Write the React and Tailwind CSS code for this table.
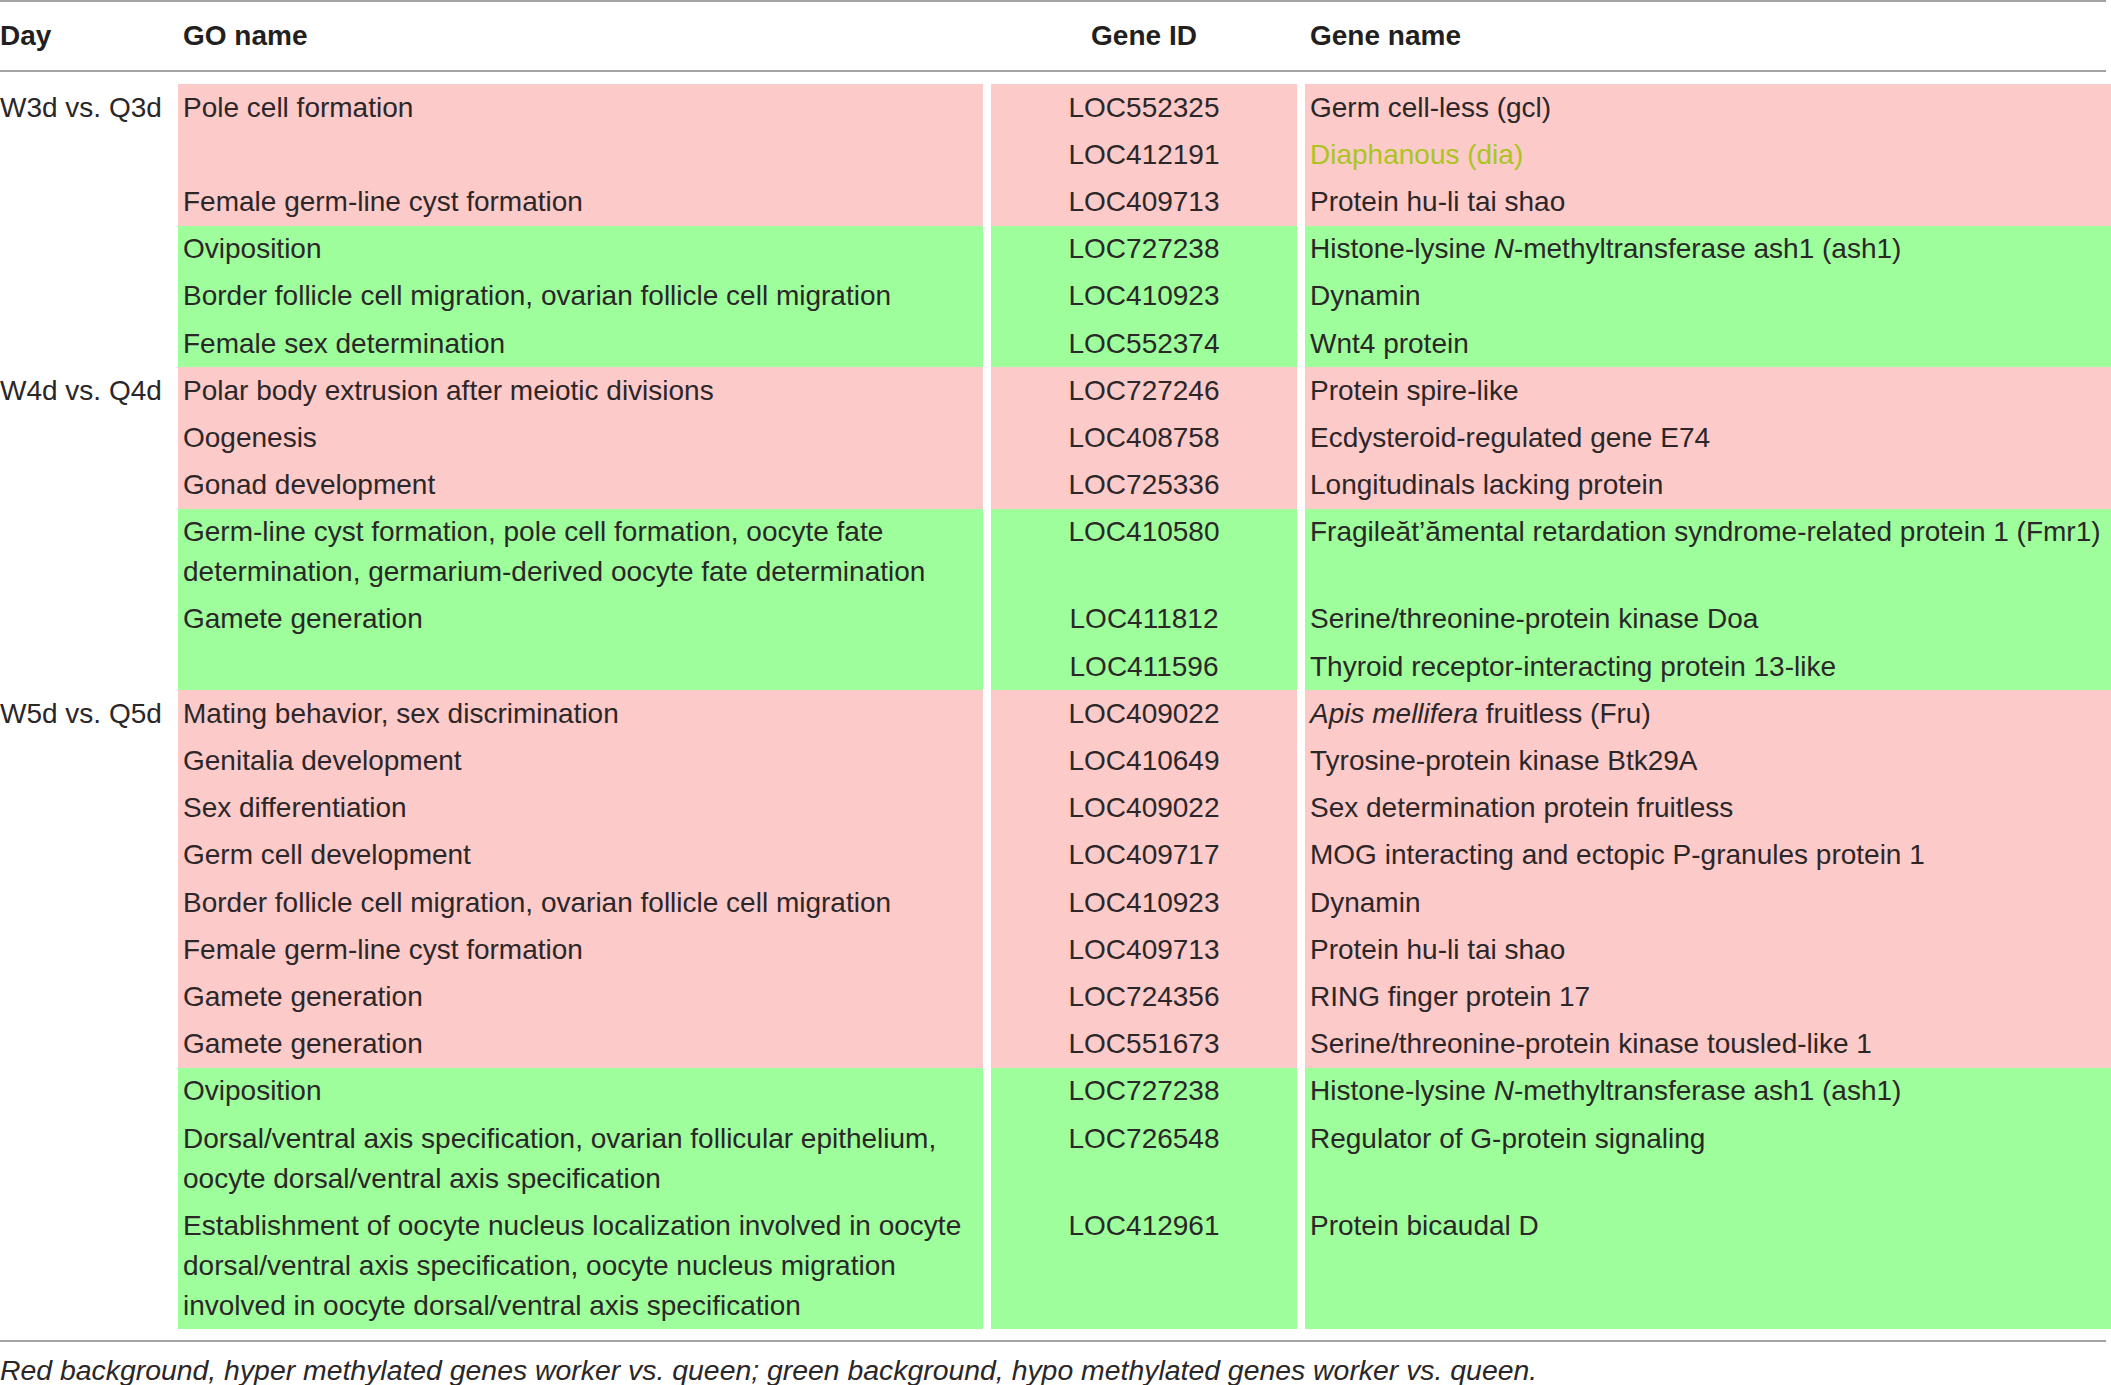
const PINK = 'bg-[#fdcaca]';
const GREEN = 'bg-[#9dfe9b]';

const rows = [
  { day: 'W3d vs. Q3d', go: ['Pole cell formation'], id: 'LOC552325', name: 'Germ cell-less (gcl)', c: 'p' },
  { go: [], id: 'LOC412191', name: <span className="text-[#abc520]">Diaphanous (dia)</span>, c: 'p' },
  { go: ['Female germ-line cyst formation'], id: 'LOC409713', name: 'Protein hu-li tai shao', c: 'p' },
  { go: ['Oviposition'], id: 'LOC727238', name: <>Histone-lysine <i>N</i>-methyltransferase ash1 (ash1)</>, c: 'g' },
  { go: ['Border follicle cell migration, ovarian follicle cell migration'], id: 'LOC410923', name: 'Dynamin', c: 'g' },
  { go: ['Female sex determination'], id: 'LOC552374', name: 'Wnt4 protein', c: 'g' },
  { day: 'W4d vs. Q4d', go: ['Polar body extrusion after meiotic divisions'], id: 'LOC727246', name: 'Protein spire-like', c: 'p' },
  { go: ['Oogenesis'], id: 'LOC408758', name: 'Ecdysteroid-regulated gene E74', c: 'p' },
  { go: ['Gonad development'], id: 'LOC725336', name: 'Longitudinals lacking protein', c: 'p' },
  {
    go: ['Germ-line cyst formation, pole cell formation, oocyte fate', 'determination, germarium-derived oocyte fate determination'],
    id: 'LOC410580',
    name: 'Fragileăt’ămental retardation syndrome-related protein 1 (Fmr1)',
    c: 'g',
  },
  { go: ['Gamete generation'], id: 'LOC411812', name: 'Serine/threonine-protein kinase Doa', c: 'g' },
  { go: [], id: 'LOC411596', name: 'Thyroid receptor-interacting protein 13-like', c: 'g' },
  { day: 'W5d vs. Q5d', go: ['Mating behavior, sex discrimination'], id: 'LOC409022', name: <><i>Apis mellifera</i> fruitless (Fru)</>, c: 'p' },
  { go: ['Genitalia development'], id: 'LOC410649', name: 'Tyrosine-protein kinase Btk29A', c: 'p' },
  { go: ['Sex differentiation'], id: 'LOC409022', name: 'Sex determination protein fruitless', c: 'p' },
  { go: ['Germ cell development'], id: 'LOC409717', name: 'MOG interacting and ectopic P-granules protein 1', c: 'p' },
  { go: ['Border follicle cell migration, ovarian follicle cell migration'], id: 'LOC410923', name: 'Dynamin', c: 'p' },
  { go: ['Female germ-line cyst formation'], id: 'LOC409713', name: 'Protein hu-li tai shao', c: 'p' },
  { go: ['Gamete generation'], id: 'LOC724356', name: 'RING finger protein 17', c: 'p' },
  { go: ['Gamete generation'], id: 'LOC551673', name: 'Serine/threonine-protein kinase tousled-like 1', c: 'p' },
  { go: ['Oviposition'], id: 'LOC727238', name: <>Histone-lysine <i>N</i>-methyltransferase ash1 (ash1)</>, c: 'g' },
  {
    go: ['Dorsal/ventral axis specification, ovarian follicular epithelium,', 'oocyte dorsal/ventral axis specification'],
    id: 'LOC726548',
    name: 'Regulator of G-protein signaling',
    c: 'g',
  },
  {
    go: [
      'Establishment of oocyte nucleus localization involved in oocyte',
      'dorsal/ventral axis specification, oocyte nucleus migration',
      'involved in oocyte dorsal/ventral axis specification',
    ],
    id: 'LOC412961',
    name: 'Protein bicaudal D',
    c: 'g',
  },
];

function Row({ row }) {
  const bg = row.c === 'p' ? PINK : GREEN;
  return (
    <>
      <div className="py-[3.6px] whitespace-nowrap">{row.day}</div>
      <div className={`${bg} py-[3.6px] pl-[5px] whitespace-nowrap`}>
        {row.go.map((line, i) => (
          <div key={i}>{line}</div>
        ))}
      </div>
      <div className={`${bg} py-[3.6px] text-center`}>{row.id}</div>
      <div className={`${bg} py-[3.6px] pl-[5px] whitespace-nowrap`}>{row.name}</div>
    </>
  );
}

export default function App() {
  return (
    <div className="h-[1385px] w-[2111px] overflow-hidden bg-white font-['Liberation_Sans',Arial,sans-serif] text-[28px] leading-[40px] text-[#2b2728]">
      <div className="w-[2106px] border-y-2 border-[#a3a3a3]">
        <div className="grid h-[68px] grid-cols-[170px_805px_306px_806px] items-center gap-x-2 font-bold text-[#231f20]">
          <div>Day</div>
          <div className="pl-[5px]">GO name</div>
          <div className="text-center">Gene ID</div>
          <div className="pl-[5px]">Gene name</div>
        </div>
      </div>

      <div className="mt-3 grid grid-cols-[170px_805px_306px_806px] gap-x-2">
        {rows.map((row, i) => (
          <Row key={i} row={row} />
        ))}
      </div>

      <div className="mt-[11px] w-[2106px] border-t-2 border-[#a3a3a3]" />
      <p className="mt-[8px] text-[28.4px] italic whitespace-nowrap">
        Red background, hyper methylated genes worker vs. queen; green background, hypo methylated genes worker vs. queen.
      </p>
    </div>
  );
}
